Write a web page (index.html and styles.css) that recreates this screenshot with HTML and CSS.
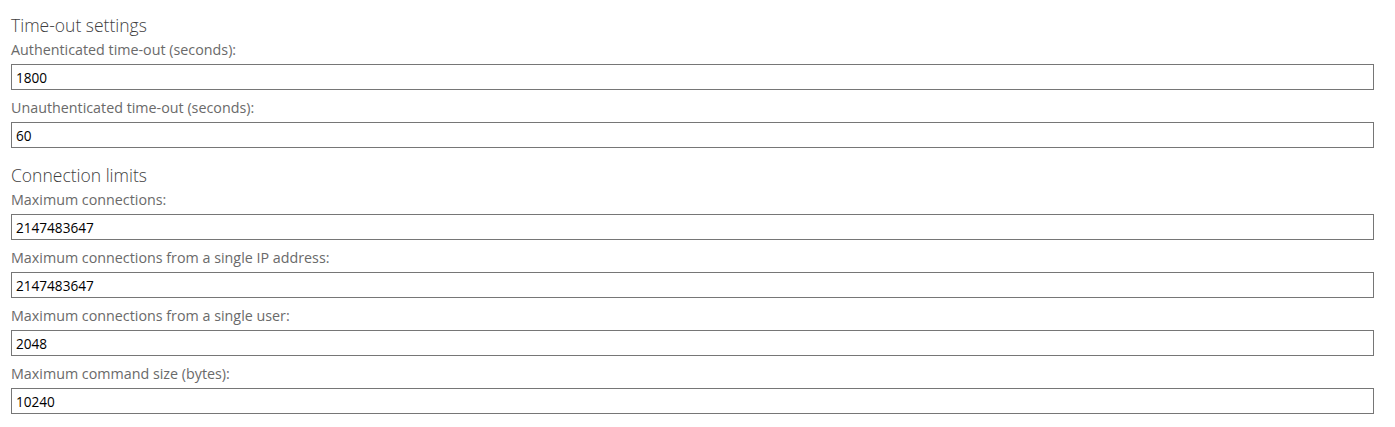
FILE: index.html
```html
<!DOCTYPE html>
<html lang="en">
<head>
<meta charset="utf-8">
<title>Settings</title>
<link rel="stylesheet" href="styles.css">
</head>
<body>
<main class="page">
  <section class="group">
    <h2 class="group-title">Time-out settings</h2>
    <div class="field">
      <label class="field-label" for="auth">Authenticated time-out (seconds):</label>
      <input class="field-input" id="auth" type="text" value="1800">
    </div>
    <div class="field">
      <label class="field-label" for="unauth">Unauthenticated time-out (seconds):</label>
      <input class="field-input" id="unauth" type="text" value="60">
    </div>
  </section>
  <section class="group">
    <h2 class="group-title">Connection limits</h2>
    <div class="field">
      <label class="field-label" for="maxconn">Maximum connections:</label>
      <input class="field-input" id="maxconn" type="text" value="2147483647">
    </div>
    <div class="field">
      <label class="field-label" for="maxip">Maximum connections from a single IP address:</label>
      <input class="field-input" id="maxip" type="text" value="2147483647">
    </div>
    <div class="field">
      <label class="field-label" for="maxuser">Maximum connections from a single user:</label>
      <input class="field-input" id="maxuser" type="text" value="2048">
    </div>
    <div class="field">
      <label class="field-label" for="maxcmd">Maximum command size (bytes):</label>
      <input class="field-input" id="maxcmd" type="text" value="10240">
    </div>
  </section>
</main>
</body>
</html>
```
FILE: styles.css
```css
html, body {
  margin: 0;
  padding: 0;
  background: #ffffff;
}

body {
  font-family: "Open Sans", "Noto Sans", "Liberation Sans", sans-serif;
}

.page {
  padding: 13px 21px 0 11px;
  display: flex;
  flex-direction: column;
  gap: 15px;
}

.group {
  display: flex;
  flex-direction: column;
}

.group-title {
  margin: 0 0 3px 0;
  font-size: 17.5px;
  line-height: 24px;
  font-weight: 300;
  color: #3f3f3f;
}

.field {
  display: flex;
  flex-direction: column;
  gap: 4px;
  margin-bottom: 8px;
}

.field:last-child {
  margin-bottom: 0;
}

.field-label {
  font-size: 14.3px;
  line-height: 20px;
  color: #6a6a6a;
}

.field-input {
  box-sizing: border-box;
  height: 26px;
  width: 100%;
  margin: 0;
  padding: 0 4px;
  border: 1px solid #767676;
  border-radius: 0;
  font-family: "Open Sans", "Noto Sans", "Liberation Sans", sans-serif;
  font-size: 13.6px;
  color: #000000;
  background: #ffffff;
  outline: none;
}
```
